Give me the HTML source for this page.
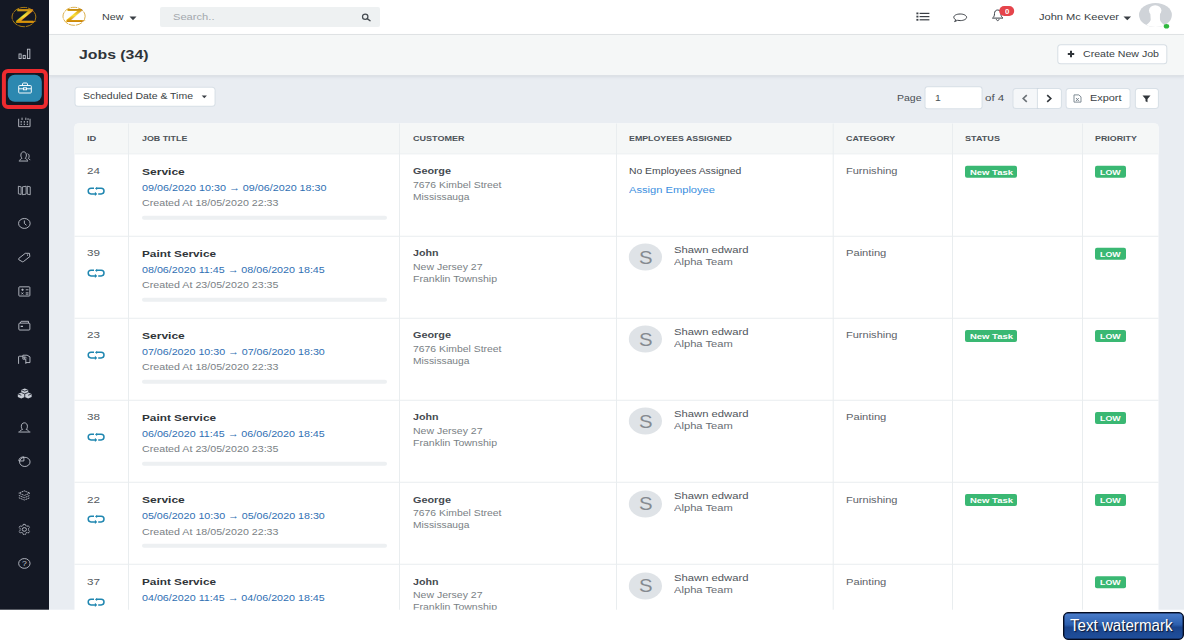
<!DOCTYPE html>
<html lang="en"><head><meta charset="utf-8"><title>Jobs</title><style>
html,body{margin:0;padding:0;background:#fff;}
body{width:1184px;height:640px;position:relative;overflow:hidden;font-family:"Liberation Sans",sans-serif;}
.b{position:absolute;box-sizing:border-box;display:block;}
.t{position:absolute;white-space:nowrap;line-height:1;transform-origin:0 50%;}
</style></head><body>
<div class="b" style="left:0px;top:0px;width:1184px;height:611px;background:#e9edf2;"></div>
<div class="b" style="left:49px;top:0px;width:1135px;height:35px;background:#fff;border-bottom:1px solid #e2e5e7;"></div>
<div class="b" style="left:49px;top:35px;width:1135px;height:41px;background:#f5f7f7;border-bottom:1px solid #dde1e6;box-shadow:0 1px 3px rgba(60,70,90,.10);"></div>
<div class="b" style="left:0px;top:0px;width:49px;height:611px;background:#141824;"></div>
<svg class="b" style="left:11.2px;top:5.8px;overflow:visible;" width="27" height="22" viewBox="0 0 27 22"><defs><linearGradient id="ga" gradientUnits="userSpaceOnUse" x1="0" y1="-15" x2="0" y2="0.500"><stop offset="0" stop-color="#b27206"/><stop offset=".28" stop-color="#e3b424"/><stop offset=".52" stop-color="#f7df3c"/><stop offset=".8" stop-color="#e0a410"/><stop offset="1" stop-color="#c47c05"/></linearGradient></defs>
<ellipse cx="12.950" cy="11.050" rx="11.900" ry="9.650" fill="none" stroke="#cf9410" stroke-width="0.800" stroke-dasharray="7 0.800"/>
<path d="M19 15.200L25.800 15.300 19 17z" fill="#d9960c"/>
<text transform="translate(3.900 17) scale(1.520 1)" font-family="Liberation Sans, sans-serif" font-weight="700" font-size="20.600" fill="url(#ga)">Z</text></svg>
<svg class="b" style="left:62px;top:5.9px;overflow:visible;" width="25.2" height="20.5" viewBox="0 0 27 22"><defs><linearGradient id="gb" gradientUnits="userSpaceOnUse" x1="0" y1="-15" x2="0" y2="0.500"><stop offset="0" stop-color="#b27206"/><stop offset=".28" stop-color="#e3b424"/><stop offset=".52" stop-color="#f7df3c"/><stop offset=".8" stop-color="#e0a410"/><stop offset="1" stop-color="#c47c05"/></linearGradient></defs>
<ellipse cx="12.950" cy="11.050" rx="11.900" ry="9.650" fill="none" stroke="#cf9410" stroke-width="0.800" stroke-dasharray="7 0.800"/>
<path d="M19 15.200L25.800 15.300 19 17z" fill="#d9960c"/>
<text transform="translate(3.900 17) scale(1.520 1)" font-family="Liberation Sans, sans-serif" font-weight="700" font-size="20.600" fill="url(#gb)">Z</text></svg>
<span class="t" style="left:101.50px;top:13px;font-size:9px;color:#3a3f45;transform:scaleX(1.1934);">New</span>
<svg class="b" style="left:129px;top:15.5px;" width="8" height="5" viewBox="0 0 8 5"><path d="M0.5 0.5h7l-3.5 3.8z" fill="#3a3f45"/></svg>
<div class="b" style="left:160px;top:7px;width:220px;height:20px;background:#eef1f2;border-radius:2px;"></div>
<span class="t" style="left:172.50px;top:13px;font-size:9px;color:#a3a8ad;transform:scaleX(1.2377);">Search..</span>
<svg class="b" style="left:361px;top:13px;" width="11" height="9" viewBox="0 0 11 9"><circle cx="4.200" cy="3.700" r="2.700" fill="none" stroke="#454b51" stroke-width="1.250"/><path d="M6.200 5.600l2.900 2.100" stroke="#454b51" stroke-width="1.400" stroke-linecap="round"/></svg>
<svg class="b" style="left:915.5px;top:11.7px;" width="14" height="10" viewBox="0 0 14 10"><g fill="#3a3f45"><rect x="0.400" y="0.500" width="2" height="1.800"/><rect x="0.400" y="3.700" width="2" height="1.800"/><rect x="0.400" y="6.900" width="2" height="1.800"/><rect x="3.600" y="0.800" width="9.800" height="1.200"/><rect x="3.600" y="4" width="9.800" height="1.200"/><rect x="3.600" y="7.200" width="9.800" height="1.200"/></g></svg>
<svg class="b" style="left:952px;top:12.5px;" width="16" height="10" viewBox="0 0 16 10"><path d="M8.2 1C4.6 1 1.8 2.4 1.8 4.3c0 1 .8 1.9 2 2.5L2.6 8.6l3-1.3c.8.2 1.7.3 2.6.3 3.6 0 6.4-1.500 6.400-3.300S11.8 1 8.2 1z" fill="none" stroke="#3a3f45" stroke-width="1"/></svg>
<svg class="b" style="left:991px;top:9px;" width="14" height="13" viewBox="0 0 14 13"><path d="M6.700 1c-2.200 0-3.200 1.600-3.200 3.600 0 2.400-.7 3.400-2 4.500h10.400c-1.300-1.100-2-2.100-2-4.500 0-2-1-3.600-3.200-3.600z" fill="none" stroke="#3a3f45" stroke-width="1"/><path d="M5.300 10.100c.2 1 .7 1.500 1.400 1.500s1.200-.500 1.400-1.500" fill="none" stroke="#3a3f45" stroke-width="1"/></svg>
<div class="b" style="left:999px;top:6px;width:14.8px;height:10px;background:#e5444b;transform:translate(0.20px,0.00px);border-radius:5px;"></div>
<span class="t" style="left:1004.60px;top:8px;font-size:7px;color:#fff;font-weight:700;transform:scaleX(1.1264);">0</span>
<span class="t" style="left:1039.00px;top:13px;font-size:9px;color:#3a3f45;transform:scaleX(1.2302);">John Mc Keever</span>
<svg class="b" style="left:1122.5px;top:15.5px;" width="9" height="5" viewBox="0 0 9 5"><path d="M0.5 0.5h7.600l-3.800 3.800z" fill="#3a3f45"/></svg>
<svg class="b" style="left:1138px;top:2px;" width="36" height="28" viewBox="0 0 36 28"><defs><clipPath id="av"><ellipse cx="17.450" cy="13" rx="16.450" ry="12.100"/></clipPath></defs><ellipse cx="17.450" cy="13" rx="16.450" ry="12.100" fill="#cfd3d8"/><g clip-path="url(#av)" fill="#fff"><ellipse cx="17.200" cy="8.600" rx="6.200" ry="5.300"/><path d="M12.400 11C12.400 15 12.900 17 12.600 18.300 12 20.500 9.200 22.300 6.500 24.400L6 26.500H28L27.500 24C25.500 22.300 22.600 20.500 22.100 18.300 21.800 17 22 15 22 11z"/></g><ellipse cx="28.500" cy="24.300" rx="2.700" ry="2.300" fill="#2eb83e"/></svg>
<span class="t" style="left:78.50px;top:48px;font-size:13px;color:#2f3439;font-weight:700;transform:scaleX(1.2176);">Jobs (34)</span>
<div class="b" style="left:1058px;top:45px;width:108px;height:18px;background:#fff;transform:translate(0.30px,0.30px);border-radius:2.5px;box-shadow:0 0 0 1px rgba(190,202,214,.55);"></div>
<svg class="b" style="left:1066.5px;top:49.8px;" width="8" height="8" viewBox="0 0 8 8"><path d="M4 0.800v6.400M0.800 4h6.400" stroke="#30353a" stroke-width="2"/></svg>
<span class="t" style="left:1083.00px;top:50px;font-size:9px;color:#3a3f45;transform:scaleX(1.1777);">Create New Job</span>
<div class="b" style="left:75px;top:87px;width:139px;height:18px;background:#fff;transform:translate(0.55px,0.80px);border-radius:2.5px;box-shadow:0 0 0 1px rgba(190,202,214,.38);"></div>
<span class="t" style="left:83.30px;top:92px;font-size:9px;color:#3a3f45;transform:scaleX(1.1633);">Scheduled Date &amp; Time</span>
<svg class="b" style="left:200.5px;top:95px;" width="7" height="4" viewBox="0 0 7 4"><path d="M0.700 0.400h5.200l-2.600 2.800z" fill="#3a3f45"/></svg>
<span class="t" style="left:896.50px;top:93px;font-size:9.5px;color:#4a4f55;transform:scaleX(1.1042);">Page</span>
<div class="b" style="left:925px;top:87px;width:56px;height:21px;background:#fff;transform:translate(0.55px,0.30px);border-radius:2px;box-shadow:0 0 0 1px rgba(190,202,214,.38);"></div>
<span class="t" style="left:935.20px;top:94px;font-size:9px;color:#4a4f55;transform:scaleX(1.1564);">1</span>
<span class="t" style="left:985.30px;top:93px;font-size:9.5px;color:#4a4f55;transform:scaleX(1.2169);">of 4</span>
<div class="b" style="left:1013px;top:89px;width:24px;height:19px;background:#f5f7f9;transform:translate(0.50px,0.10px);border-radius:2.5px 0 0 2.5px;box-shadow:0 0 0 1px rgba(190,202,214,.38);"></div>
<div class="b" style="left:1037px;top:89px;width:23px;height:19px;background:#fff;transform:translate(0.90px,0.10px);border-radius:0 2.5px 2.5px 0;box-shadow:0 0 0 1px rgba(190,202,214,.38);"></div>
<svg class="b" style="left:1021px;top:94px;" width="8" height="9" viewBox="0 0 8 9"><path d="M5.800 1.200L2.200 4.500l3.600 3.300" fill="none" stroke="#6a7076" stroke-width="1.600"/></svg>
<svg class="b" style="left:1045px;top:94px;" width="8" height="9" viewBox="0 0 8 9"><path d="M2.200 1.200l3.600 3.300-3.600 3.300" fill="none" stroke="#30353a" stroke-width="1.600"/></svg>
<div class="b" style="left:1066px;top:89px;width:63px;height:19px;background:#fff;transform:translate(0.60px,0.00px);border-radius:2.5px;box-shadow:0 0 0 1px rgba(190,202,214,.38);"></div>
<svg class="b" style="left:1073.3px;top:93.5px;" width="9" height="9" viewBox="0 0 9 9"><path d="M1 0.900h4.800l2.200 2v5.200h-7z" fill="none" stroke="#6a7883" stroke-width="0.850"/><path d="M3 4l2.800 3M5.800 4l-2.800 3" stroke="#6a7883" stroke-width="0.850"/></svg>
<span class="t" style="left:1090.30px;top:94px;font-size:9px;color:#3a3f45;transform:scaleX(1.2108);">Export</span>
<div class="b" style="left:1135px;top:89px;width:22px;height:19px;background:#fff;transform:translate(0.90px,0.00px);border-radius:2.5px;box-shadow:0 0 0 1px rgba(190,202,214,.38);"></div>
<svg class="b" style="left:1142px;top:94.5px;" width="9" height="8" viewBox="0 0 9 8"><path d="M0.500 0.600h8l-3 3.400v3.300l-2-1v-2.300z" fill="#30353a"/></svg>
<div class="b" style="left:74px;top:123px;width:1084px;height:486.70000000000005px;background:#fff;transform:translate(0.50px,0.50px);border-radius:4px 4px 0 0;"></div>
<div class="b" style="left:74px;top:123px;width:1084px;height:30.7px;background:#f5f7f7;transform:translate(0.50px,0.50px);border-radius:4px 4px 0 0;border-bottom:1px solid #e3e7ea;"></div>
<div class="b" style="left:128px;top:123px;width:1px;height:486.70000000000005px;background:#e9edef;transform:translate(0.00px,0.50px);"></div>
<div class="b" style="left:399px;top:123px;width:1px;height:486.70000000000005px;background:#e9edef;transform:translate(0.00px,0.50px);"></div>
<div class="b" style="left:616px;top:123px;width:1px;height:486.70000000000005px;background:#e9edef;transform:translate(0.00px,0.50px);"></div>
<div class="b" style="left:832px;top:123px;width:1px;height:486.70000000000005px;background:#e9edef;transform:translate(0.70px,0.50px);"></div>
<div class="b" style="left:952px;top:123px;width:1px;height:486.70000000000005px;background:#e9edef;transform:translate(0.00px,0.50px);"></div>
<div class="b" style="left:1082px;top:123px;width:1px;height:486.70000000000005px;background:#e9edef;transform:translate(0.00px,0.50px);"></div>
<span class="t" style="left:87.30px;top:135px;font-size:7.3px;color:#4d5359;font-weight:700;transform:scaleX(1.2718);">ID</span>
<span class="t" style="left:141.80px;top:135px;font-size:7.3px;color:#4d5359;font-weight:700;transform:scaleX(1.2146);">JOB TITLE</span>
<span class="t" style="left:412.80px;top:135px;font-size:7.3px;color:#4d5359;font-weight:700;transform:scaleX(1.2372);">CUSTOMER</span>
<span class="t" style="left:629.30px;top:135px;font-size:7.3px;color:#4d5359;font-weight:700;transform:scaleX(1.2075);">EMPLOYEES ASSIGNED</span>
<span class="t" style="left:846.30px;top:135px;font-size:7.3px;color:#4d5359;font-weight:700;transform:scaleX(1.2159);">CATEGORY</span>
<span class="t" style="left:965.30px;top:135px;font-size:7.3px;color:#4d5359;font-weight:700;transform:scaleX(1.2451);">STATUS</span>
<span class="t" style="left:1095.30px;top:135px;font-size:7.3px;color:#4d5359;font-weight:700;transform:scaleX(1.2127);">PRIORITY</span>
<span class="t" style="left:87.30px;top:167px;font-size:9px;color:#555a60;transform:scaleX(1.2980);">24</span>
<svg class="b" style="left:86px;top:186.15px;" width="20" height="11" viewBox="0 0 20 11"><path d="M8 2.300H5c-1.800 0-2.800 1.200-2.800 2.800s1 2.800 2.800 2.800h4.500M12.200 7.900H15.200c1.800 0 2.800-1.200 2.800-2.800s-1-2.800-2.800-2.800H10.800" fill="none" stroke="#1f86b0" stroke-width="1.500"/><path d="M9 2.400l2.100-1.700v3.400zM11.200 7.900l-2.300-2.100v4.200z" fill="#1f86b0"/></svg>
<span class="t" style="left:141.80px;top:167px;font-size:9.7px;color:#2f3439;font-weight:700;transform:scaleX(1.2411);">Service</span>
<span class="t" style="left:141.80px;top:184px;font-size:9.3px;color:#2f6fb3;transform:scaleX(1.1594);">09/06/2020 10:30 &#8594; 09/06/2020 18:30</span>
<span class="t" style="left:141.80px;top:199px;font-size:9.3px;color:#7a7f85;transform:scaleX(1.1481);">Created At 18/05/2020 22:33</span>
<div class="b" style="left:142px;top:215px;width:245px;height:3.5px;background:#edf0f2;transform:translate(0.00px,0.85px);border-radius:2px;"></div>
<span class="t" style="left:412.80px;top:167px;font-size:9px;color:#454a50;font-weight:700;transform:scaleX(1.2058);">George</span>
<span class="t" style="left:412.80px;top:181px;font-size:9px;color:#7a7f85;transform:scaleX(1.1562);">7676 Kimbel Street</span>
<span class="t" style="left:412.80px;top:193px;font-size:9px;color:#7a7f85;transform:scaleX(1.1407);">Mississauga</span>
<span class="t" style="left:629.30px;top:167px;font-size:9px;color:#454a50;transform:scaleX(1.1511);">No Employees Assigned</span>
<span class="t" style="left:629.30px;top:185px;font-size:9.6px;color:#3b8fe0;transform:scaleX(1.1602);">Assign Employee</span>
<span class="t" style="left:846.30px;top:167px;font-size:9px;color:#5d6268;transform:scaleX(1.2253);">Furnishing</span>
<div class="b" style="left:965px;top:165px;width:52px;height:12.2px;background:#3ab873;transform:translate(0.00px,0.75px);border-radius:2px;"></div>
<span class="t" style="left:969.80px;top:169px;font-size:8px;color:#fff;font-weight:700;transform:scaleX(1.1842);">New Task</span>
<div class="b" style="left:1095px;top:165px;width:30.8px;height:12.2px;background:#3ab873;transform:translate(0.00px,0.75px);border-radius:2px;"></div>
<span class="t" style="left:1100.10px;top:169px;font-size:7px;color:#fff;font-weight:700;transform:scaleX(1.2616);">LOW</span>
<div class="b" style="left:74px;top:235px;width:1084px;height:1px;background:#e9edef;transform:translate(0.50px,0.75px);"></div>
<span class="t" style="left:87.30px;top:249px;font-size:9px;color:#555a60;transform:scaleX(1.2980);">39</span>
<svg class="b" style="left:86px;top:268.22999999999996px;" width="20" height="11" viewBox="0 0 20 11"><path d="M8 2.300H5c-1.800 0-2.800 1.200-2.800 2.800s1 2.800 2.800 2.800h4.500M12.200 7.900H15.200c1.800 0 2.800-1.200 2.800-2.800s-1-2.800-2.800-2.800H10.800" fill="none" stroke="#1f86b0" stroke-width="1.500"/><path d="M9 2.400l2.100-1.700v3.400zM11.200 7.900l-2.300-2.100v4.200z" fill="#1f86b0"/></svg>
<span class="t" style="left:141.80px;top:249px;font-size:9.7px;color:#2f3439;font-weight:700;transform:scaleX(1.2159);">Paint Service</span>
<span class="t" style="left:141.80px;top:266px;font-size:9.3px;color:#2f6fb3;transform:scaleX(1.1531);">08/06/2020 11:45 &#8594; 08/06/2020 18:45</span>
<span class="t" style="left:141.80px;top:281px;font-size:9.3px;color:#7a7f85;transform:scaleX(1.1481);">Created At 23/05/2020 23:35</span>
<div class="b" style="left:142px;top:297px;width:245px;height:3.5px;background:#edf0f2;transform:translate(0.00px,0.85px);border-radius:2px;"></div>
<span class="t" style="left:412.80px;top:249px;font-size:9px;color:#454a50;font-weight:700;transform:scaleX(1.1860);">John</span>
<span class="t" style="left:412.80px;top:263px;font-size:9px;color:#7a7f85;transform:scaleX(1.1675);">New Jersey 27</span>
<span class="t" style="left:412.80px;top:275px;font-size:9px;color:#7a7f85;transform:scaleX(1.1687);">Franklin Township</span>
<svg class="b" style="left:628px;top:243.32999999999998px;" width="35" height="28" viewBox="0 0 35 28"><ellipse cx="17.400" cy="14" rx="16.600" ry="13.500" fill="#dfe3e7"/></svg>
<span class="t" style="left:638.80px;top:248px;font-size:19px;color:#858a90;transform:scaleX(1.0719);">S</span>
<span class="t" style="left:674.30px;top:245px;font-size:9.4px;color:#50555b;transform:scaleX(1.2010);">Shawn edward</span>
<span class="t" style="left:674.30px;top:257px;font-size:9.4px;color:#686d73;transform:scaleX(1.1916);">Alpha Team</span>
<span class="t" style="left:846.30px;top:249px;font-size:9px;color:#5d6268;transform:scaleX(1.2388);">Painting</span>
<div class="b" style="left:1095px;top:247px;width:30.8px;height:12.2px;background:#3ab873;transform:translate(0.00px,0.83px);border-radius:2px;"></div>
<span class="t" style="left:1100.10px;top:251px;font-size:7px;color:#fff;font-weight:700;transform:scaleX(1.2616);">LOW</span>
<div class="b" style="left:74px;top:317px;width:1084px;height:1px;background:#e9edef;transform:translate(0.50px,0.75px);"></div>
<span class="t" style="left:87.30px;top:331px;font-size:9px;color:#555a60;transform:scaleX(1.2980);">23</span>
<svg class="b" style="left:86px;top:350.30999999999995px;" width="20" height="11" viewBox="0 0 20 11"><path d="M8 2.300H5c-1.800 0-2.800 1.200-2.800 2.800s1 2.800 2.800 2.800h4.500M12.200 7.900H15.200c1.800 0 2.800-1.200 2.800-2.800s-1-2.800-2.800-2.800H10.800" fill="none" stroke="#1f86b0" stroke-width="1.500"/><path d="M9 2.400l2.100-1.700v3.400zM11.200 7.900l-2.300-2.100v4.200z" fill="#1f86b0"/></svg>
<span class="t" style="left:141.80px;top:331px;font-size:9.7px;color:#2f3439;font-weight:700;transform:scaleX(1.2411);">Service</span>
<span class="t" style="left:141.80px;top:348px;font-size:9.3px;color:#2f6fb3;transform:scaleX(1.1481);">07/06/2020 10:30 &#8594; 07/06/2020 18:30</span>
<span class="t" style="left:141.80px;top:363px;font-size:9.3px;color:#7a7f85;transform:scaleX(1.1481);">Created At 18/05/2020 22:33</span>
<div class="b" style="left:142px;top:379px;width:245px;height:3.5px;background:#edf0f2;transform:translate(0.00px,0.85px);border-radius:2px;"></div>
<span class="t" style="left:412.80px;top:331px;font-size:9px;color:#454a50;font-weight:700;transform:scaleX(1.2058);">George</span>
<span class="t" style="left:412.80px;top:345px;font-size:9px;color:#7a7f85;transform:scaleX(1.1562);">7676 Kimbel Street</span>
<span class="t" style="left:412.80px;top:357px;font-size:9px;color:#7a7f85;transform:scaleX(1.1407);">Mississauga</span>
<svg class="b" style="left:628px;top:325.40999999999997px;" width="35" height="28" viewBox="0 0 35 28"><ellipse cx="17.400" cy="14" rx="16.600" ry="13.500" fill="#dfe3e7"/></svg>
<span class="t" style="left:638.80px;top:330px;font-size:19px;color:#858a90;transform:scaleX(1.0719);">S</span>
<span class="t" style="left:674.30px;top:327px;font-size:9.4px;color:#50555b;transform:scaleX(1.2010);">Shawn edward</span>
<span class="t" style="left:674.30px;top:339px;font-size:9.4px;color:#686d73;transform:scaleX(1.1916);">Alpha Team</span>
<span class="t" style="left:846.30px;top:331px;font-size:9px;color:#5d6268;transform:scaleX(1.2253);">Furnishing</span>
<div class="b" style="left:965px;top:329px;width:52px;height:12.2px;background:#3ab873;transform:translate(0.00px,0.91px);border-radius:2px;"></div>
<span class="t" style="left:969.80px;top:333px;font-size:8px;color:#fff;font-weight:700;transform:scaleX(1.1842);">New Task</span>
<div class="b" style="left:1095px;top:329px;width:30.8px;height:12.2px;background:#3ab873;transform:translate(0.00px,0.91px);border-radius:2px;"></div>
<span class="t" style="left:1100.10px;top:333px;font-size:7px;color:#fff;font-weight:700;transform:scaleX(1.2616);">LOW</span>
<div class="b" style="left:74px;top:399px;width:1084px;height:1px;background:#e9edef;transform:translate(0.50px,0.75px);"></div>
<span class="t" style="left:87.30px;top:413px;font-size:9px;color:#555a60;transform:scaleX(1.2980);">38</span>
<svg class="b" style="left:86px;top:432.39px;" width="20" height="11" viewBox="0 0 20 11"><path d="M8 2.300H5c-1.800 0-2.800 1.200-2.800 2.800s1 2.800 2.800 2.800h4.500M12.200 7.900H15.200c1.800 0 2.800-1.200 2.800-2.800s-1-2.800-2.800-2.800H10.800" fill="none" stroke="#1f86b0" stroke-width="1.500"/><path d="M9 2.400l2.100-1.700v3.400zM11.200 7.900l-2.300-2.100v4.200z" fill="#1f86b0"/></svg>
<span class="t" style="left:141.80px;top:413px;font-size:9.7px;color:#2f3439;font-weight:700;transform:scaleX(1.2159);">Paint Service</span>
<span class="t" style="left:141.80px;top:430px;font-size:9.3px;color:#2f6fb3;transform:scaleX(1.1531);">06/06/2020 11:45 &#8594; 06/06/2020 18:45</span>
<span class="t" style="left:141.80px;top:445px;font-size:9.3px;color:#7a7f85;transform:scaleX(1.1481);">Created At 23/05/2020 23:35</span>
<div class="b" style="left:142px;top:461px;width:245px;height:3.5px;background:#edf0f2;transform:translate(0.00px,0.85px);border-radius:2px;"></div>
<span class="t" style="left:412.80px;top:413px;font-size:9px;color:#454a50;font-weight:700;transform:scaleX(1.1860);">John</span>
<span class="t" style="left:412.80px;top:427px;font-size:9px;color:#7a7f85;transform:scaleX(1.1675);">New Jersey 27</span>
<span class="t" style="left:412.80px;top:439px;font-size:9px;color:#7a7f85;transform:scaleX(1.1687);">Franklin Township</span>
<svg class="b" style="left:628px;top:407.49px;" width="35" height="28" viewBox="0 0 35 28"><ellipse cx="17.400" cy="14" rx="16.600" ry="13.500" fill="#dfe3e7"/></svg>
<span class="t" style="left:638.80px;top:412px;font-size:19px;color:#858a90;transform:scaleX(1.0719);">S</span>
<span class="t" style="left:674.30px;top:409px;font-size:9.4px;color:#50555b;transform:scaleX(1.2010);">Shawn edward</span>
<span class="t" style="left:674.30px;top:421px;font-size:9.4px;color:#686d73;transform:scaleX(1.1916);">Alpha Team</span>
<span class="t" style="left:846.30px;top:413px;font-size:9px;color:#5d6268;transform:scaleX(1.2388);">Painting</span>
<div class="b" style="left:1095px;top:411px;width:30.8px;height:12.2px;background:#3ab873;transform:translate(0.00px,0.99px);border-radius:2px;"></div>
<span class="t" style="left:1100.10px;top:415px;font-size:7px;color:#fff;font-weight:700;transform:scaleX(1.2616);">LOW</span>
<div class="b" style="left:74px;top:481px;width:1084px;height:1px;background:#e9edef;transform:translate(0.50px,0.75px);"></div>
<span class="t" style="left:87.30px;top:496px;font-size:9px;color:#555a60;transform:scaleX(1.2980);">22</span>
<svg class="b" style="left:86px;top:514.47px;" width="20" height="11" viewBox="0 0 20 11"><path d="M8 2.300H5c-1.800 0-2.800 1.200-2.800 2.800s1 2.800 2.800 2.800h4.500M12.200 7.900H15.200c1.800 0 2.800-1.200 2.800-2.800s-1-2.800-2.800-2.800H10.800" fill="none" stroke="#1f86b0" stroke-width="1.500"/><path d="M9 2.400l2.100-1.700v3.400zM11.200 7.900l-2.300-2.100v4.200z" fill="#1f86b0"/></svg>
<span class="t" style="left:141.80px;top:495px;font-size:9.7px;color:#2f3439;font-weight:700;transform:scaleX(1.2411);">Service</span>
<span class="t" style="left:141.80px;top:512px;font-size:9.3px;color:#2f6fb3;transform:scaleX(1.1481);">05/06/2020 10:30 &#8594; 05/06/2020 18:30</span>
<span class="t" style="left:141.80px;top:528px;font-size:9.3px;color:#7a7f85;transform:scaleX(1.1481);">Created At 18/05/2020 22:33</span>
<div class="b" style="left:142px;top:543px;width:245px;height:3.5px;background:#edf0f2;transform:translate(0.00px,0.85px);border-radius:2px;"></div>
<span class="t" style="left:412.80px;top:496px;font-size:9px;color:#454a50;font-weight:700;transform:scaleX(1.2058);">George</span>
<span class="t" style="left:412.80px;top:509px;font-size:9px;color:#7a7f85;transform:scaleX(1.1562);">7676 Kimbel Street</span>
<span class="t" style="left:412.80px;top:521px;font-size:9px;color:#7a7f85;transform:scaleX(1.1407);">Mississauga</span>
<svg class="b" style="left:628px;top:489.57px;" width="35" height="28" viewBox="0 0 35 28"><ellipse cx="17.400" cy="14" rx="16.600" ry="13.500" fill="#dfe3e7"/></svg>
<span class="t" style="left:638.80px;top:494px;font-size:19px;color:#858a90;transform:scaleX(1.0719);">S</span>
<span class="t" style="left:674.30px;top:491px;font-size:9.4px;color:#50555b;transform:scaleX(1.2010);">Shawn edward</span>
<span class="t" style="left:674.30px;top:503px;font-size:9.4px;color:#686d73;transform:scaleX(1.1916);">Alpha Team</span>
<span class="t" style="left:846.30px;top:496px;font-size:9px;color:#5d6268;transform:scaleX(1.2253);">Furnishing</span>
<div class="b" style="left:965px;top:494px;width:52px;height:12.2px;background:#3ab873;transform:translate(0.00px,0.07px);border-radius:2px;"></div>
<span class="t" style="left:969.80px;top:497px;font-size:8px;color:#fff;font-weight:700;transform:scaleX(1.1842);">New Task</span>
<div class="b" style="left:1095px;top:494px;width:30.8px;height:12.2px;background:#3ab873;transform:translate(0.00px,0.07px);border-radius:2px;"></div>
<span class="t" style="left:1100.10px;top:497px;font-size:7px;color:#fff;font-weight:700;transform:scaleX(1.2616);">LOW</span>
<div class="b" style="left:74px;top:563px;width:1084px;height:1px;background:#e9edef;transform:translate(0.50px,0.75px);"></div>
<span class="t" style="left:87.30px;top:578px;font-size:9px;color:#555a60;transform:scaleX(1.2980);">37</span>
<svg class="b" style="left:86px;top:596.55px;" width="20" height="11" viewBox="0 0 20 11"><path d="M8 2.300H5c-1.800 0-2.800 1.200-2.800 2.800s1 2.800 2.800 2.800h4.500M12.200 7.900H15.200c1.800 0 2.800-1.200 2.800-2.800s-1-2.800-2.800-2.800H10.800" fill="none" stroke="#1f86b0" stroke-width="1.500"/><path d="M9 2.400l2.100-1.700v3.400zM11.200 7.900l-2.300-2.100v4.200z" fill="#1f86b0"/></svg>
<span class="t" style="left:141.80px;top:577px;font-size:9.7px;color:#2f3439;font-weight:700;transform:scaleX(1.2159);">Paint Service</span>
<span class="t" style="left:141.80px;top:594px;font-size:9.3px;color:#2f6fb3;transform:scaleX(1.1531);">04/06/2020 11:45 &#8594; 04/06/2020 18:45</span>
<span class="t" style="left:412.80px;top:578px;font-size:9px;color:#454a50;font-weight:700;transform:scaleX(1.1860);">John</span>
<span class="t" style="left:412.80px;top:591px;font-size:9px;color:#7a7f85;transform:scaleX(1.1675);">New Jersey 27</span>
<span class="t" style="left:412.80px;top:603px;font-size:9px;color:#7a7f85;transform:scaleX(1.1687);">Franklin Township</span>
<svg class="b" style="left:628px;top:571.65px;" width="35" height="28" viewBox="0 0 35 28"><ellipse cx="17.400" cy="14" rx="16.600" ry="13.500" fill="#dfe3e7"/></svg>
<span class="t" style="left:638.80px;top:576px;font-size:19px;color:#858a90;transform:scaleX(1.0719);">S</span>
<span class="t" style="left:674.30px;top:573px;font-size:9.4px;color:#50555b;transform:scaleX(1.2010);">Shawn edward</span>
<span class="t" style="left:674.30px;top:585px;font-size:9.4px;color:#686d73;transform:scaleX(1.1916);">Alpha Team</span>
<span class="t" style="left:846.30px;top:578px;font-size:9px;color:#5d6268;transform:scaleX(1.2388);">Painting</span>
<div class="b" style="left:1095px;top:576px;width:30.8px;height:12.2px;background:#3ab873;transform:translate(0.00px,0.15px);border-radius:2px;"></div>
<span class="t" style="left:1100.10px;top:579px;font-size:7px;color:#fff;font-weight:700;transform:scaleX(1.2616);">LOW</span>
<div class="b" style="left:0px;top:609px;width:1184px;height:31px;background:#fff;transform:translate(0.00px,0.70px);"></div>
<div class="b" style="left:1px;top:69px;width:46.2px;height:40px;background:transparent;transform:translate(0.90px,0.00px);border:4px solid #ee2b2f;border-radius:6px;"></div>
<div class="b" style="left:7px;top:74px;width:33.6px;height:27px;background:#2c88b0;transform:translate(0.80px,0.70px);border-radius:7px;"></div>
<svg class="b" style="left:17.240000000000002px;top:47.760000000000005px;" width="14.72" height="12.88" viewBox="0 0 16 14"><g fill="none" stroke="#c3c7d0" stroke-width="0.95"><rect x="2.200" y="6.500" width="2.300" height="5"/><rect x="6.700" y="8" width="2.300" height="3.500"/><rect x="11.300" y="1.300" width="2.700" height="10.200"/></g></svg>
<svg class="b" style="left:16.8px;top:80.8px;" width="16" height="14" viewBox="0 0 16 14"><g fill="none" stroke="#fff" stroke-width="0.95"><rect x="1.700" y="4.500" width="12.600" height="7.500" rx="0.800"/><path d="M5.500 4.500V3c0-.5.400-1 1-1h3c.6 0 1 .5 1 1v1.500M1.700 7.800h4.800M9.500 7.800h4.800"/><rect x="6.500" y="6.800" width="3" height="2"/></g></svg>
<svg class="b" style="left:17.240000000000002px;top:115.56px;" width="14.72" height="12.88" viewBox="0 0 16 14"><g fill="none" stroke="#c3c7d0" stroke-width="0.95"><path d="M1.800 3v8.600h12.400V3"/><path d="M5.500 1.800v2.600M9.600 1.800v2.600M12 2.400v2"/><path d="M3.900 6.400h1.400M7.300 6.400h1.400M10.600 6.400h1.400M3.900 9h1.400M7.300 9h1.400M10.600 9h1.400" stroke-width="1.300"/></g></svg>
<svg class="b" style="left:17.240000000000002px;top:149.56px;" width="14.72" height="12.88" viewBox="0 0 16 14"><g fill="none" stroke="#c3c7d0" stroke-width="0.95"><path d="M2 12h10M3 11.500c.5-1.500 1.500-2 2.500-2.500-1-1-1.300-2-1.300-3.500 0-2 1.200-3.500 3-3.500s3 1.500 3 3.500c0 1.500-.3 2.500-1.300 3.500 1 .5 2 1 2.500 2.500M11.500 4c1 .3 1.700 1.300 1.700 2.700 0 1-.3 1.800-.8 2.300l2 2"/></g></svg>
<svg class="b" style="left:17.240000000000002px;top:183.56px;" width="14.72" height="12.88" viewBox="0 0 16 14"><g fill="none" stroke="#c3c7d0" stroke-width="0.95"><path d="M1.500 2.400l3 .700v8.300l-3-.700zM5.900 3.100l4-.700v8.600l-4 .700zM11.200 2.400l3.200.700v8.600l-3.200-.700z" stroke-width="0.850"/></g></svg>
<svg class="b" style="left:17.240000000000002px;top:217.36px;" width="14.72" height="12.88" viewBox="0 0 16 14"><g fill="none" stroke="#c3c7d0" stroke-width="0.95"><ellipse cx="8" cy="7" rx="6.300" ry="5.400"/><path d="M8 3.800V7l2.300 2"/></g></svg>
<svg class="b" style="left:17.240000000000002px;top:251.06px;" width="14.72" height="12.88" viewBox="0 0 16 14"><g fill="none" stroke="#c3c7d0" stroke-width="0.95"><path d="M2 8l7-5.500h4.500l.5 3.500-7 5.500c-.5.400-1 .4-1.500 0L2 9.500c-.4-.5-.4-1 0-1.500z"/><path d="M11 4.500h1" stroke-width="1.400"/></g></svg>
<svg class="b" style="left:17.240000000000002px;top:284.56px;" width="14.72" height="12.88" viewBox="0 0 16 14"><g fill="none" stroke="#c3c7d0" stroke-width="0.95"><rect x="2" y="2" width="12" height="10" rx="0.800"/><path d="M4.500 5.200h3M6 4v2.400M9.500 5.200h3M4.800 8.200l2 2M6.800 8.200l-2 2M9.500 8.500h3M9.500 10h3" stroke-width="0.900"/></g></svg>
<svg class="b" style="left:17.240000000000002px;top:318.56px;" width="14.72" height="12.88" viewBox="0 0 16 14"><g fill="none" stroke="#c3c7d0" stroke-width="0.95"><path d="M3.500 4.500l1-2h8l0 2"/><rect x="2" y="4.500" width="12" height="7.500" rx="1"/><path d="M4 8h2.500" stroke-width="1.300"/></g></svg>
<svg class="b" style="left:17.240000000000002px;top:352.56px;" width="14.72" height="12.88" viewBox="0 0 16 14"><g fill="none" stroke="#c3c7d0" stroke-width="0.95"><path d="M1.700 11.800V4.300Q1.700 3.500 2.500 3.500H6.400M6.400 6.700V2.400H11L14.100 4.200V10.400H9.600M9.600 11.800V6.700H6.400M6.400 4.500h2v2.200M8.500 3.600l2 2.200"/></g></svg>
<svg class="b" style="left:15.860000000000001px;top:386.56px;" width="17.48" height="12.88" viewBox="0 0 19 14"><g fill="none" stroke="#c3c7d0" stroke-width="0.95"><g transform="translate(-0.5 0) scale(1.25 1)"><g fill="#c9cdd6" stroke="none"><path d="M8 1.500l3 1.500v3l3 1.500v3.500L11 12.500 8 11l-3 1.500L2 11V7.500L5 6V3z"/></g><path d="M5 6l3 1.500L11 6M8 7.500V11M2 7.500l3 1.500M14 7.500L11 9M8 4.500L5 3M8 4.500L11 3" stroke="#141824" stroke-width="0.800"/></g></g></svg>
<svg class="b" style="left:17.240000000000002px;top:420.56px;" width="14.72" height="12.88" viewBox="0 0 16 14"><g fill="none" stroke="#c3c7d0" stroke-width="0.95"><path d="M1.500 12h13M3 11.500c.7-1.500 1.800-1.800 3-2.300C5 8.200 4.700 7.200 4.700 5.700 4.700 3.500 6 2 8 2s3.300 1.500 3.300 3.700c0 1.500-.3 2.500-1.300 3.500 1.200.5 2.300.8 3 2.300"/></g></svg>
<svg class="b" style="left:17.240000000000002px;top:454.56px;" width="14.72" height="12.88" viewBox="0 0 16 14"><g fill="none" stroke="#c3c7d0" stroke-width="0.95"><ellipse cx="8.500" cy="7.500" rx="5.700" ry="5"/><path d="M2 6.500C2 3.500 4.500 2 7.500 2v4.500z"/></g></svg>
<svg class="b" style="left:17.240000000000002px;top:488.56px;" width="14.72" height="12.88" viewBox="0 0 16 14"><g fill="none" stroke="#c3c7d0" stroke-width="0.95"><path d="M8 2l6 2.500L8 7 2 4.500zM2 7l6 2.500L14 7M2 9.500L8 12l6-2.500" stroke-dasharray="1.500 0.600"/></g></svg>
<svg class="b" style="left:17.240000000000002px;top:522.56px;" width="14.72" height="12.88" viewBox="0 0 16 14"><g fill="none" stroke="#c3c7d0" stroke-width="0.95"><ellipse cx="8" cy="7" rx="2.300" ry="2"/><path d="M6.800 1.500h2.400l.4 1.500 1.300.6 1.500-.6 1.200 1.800-1 1.200v1.900l1 1.200-1.200 1.800-1.500-.6-1.300.6-.4 1.500H6.800l-.4-1.500-1.300-.600-1.500.6L2.400 9.100l1-1.200V6l-1-1.200L3.600 3l1.500.6 1.300-.6z" stroke-dasharray="2 0.500"/></g></svg>
<svg class="b" style="left:17.240000000000002px;top:556.56px;" width="14.72" height="12.88" viewBox="0 0 16 14"><g fill="none" stroke="#c3c7d0" stroke-width="0.95"><ellipse cx="8" cy="7" rx="6.200" ry="5.300"/></g></svg>
<span class="t" style="left:22.30px;top:560px;font-size:7.5px;color:#c3c7d0;transform:scaleX(1.1506);">?</span>
<div class="b" style="left:1063px;top:612px;width:121px;height:28px;background:linear-gradient(#4c7ecb 0%,#2c5fae 45%,#1a448c 55%,#204f9c 100%);border:1px solid #050d22;border-radius:5px;box-shadow:inset 0 0 0 0.5px #0a1a40;"></div>
<span class="t" style="left:1070.30px;top:618px;font-size:16px;color:#fff;transform:scaleX(0.9450);text-shadow:1px 1px 1px #0a1530;">Text watermark</span>
</body></html>
